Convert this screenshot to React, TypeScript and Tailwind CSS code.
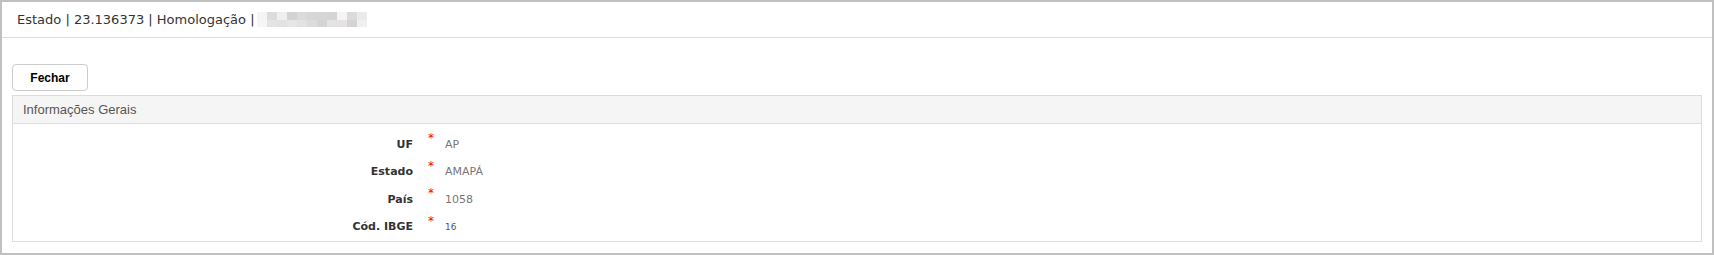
import React from 'react'

const rows = [
  { label: 'UF', value: 'AP', small: false },
  { label: 'Estado', value: 'AMAPÁ', small: false },
  { label: 'País', value: '1058', small: false },
  { label: 'Cód. IBGE', value: '16', small: true },
]

// pixelated blur blocks after the header text
const blurTop = ['#f4f4f4', '#dcdcdc', '#eeeff0', '#d6d2d2', '#dadbdc', '#d7d7d8', '#d6d6d6', '#d4d4d6', '#f7f4f2', '#dadcdc', '#e9eaeb']
const blurBottom = ['#f7f6f4', '#e4e4e4', '#e2e2e2', '#e6e6e6', '#e2e2e2', '#dcdcdc', '#d4d4d4', '#e3e3e3', '#e4e2e2', '#d4d4d4', '#f0f0f0']

export default function App() {
  return (
    <div className="w-[1714px] h-[255px] border-2 border-[#c0c0c0] bg-white flex flex-col">
      <div className="h-[37px] border-b border-[#dcdcdc] flex items-center pl-[15px] text-[13px] text-[#333] font-['DejaVu_Sans',Verdana,sans-serif]">
        <span>Estado | 23.136373 | Homologação |</span>
        <div className="ml-[2px] flex flex-col">
          <div className="flex">
            {blurTop.map((c, i) => (
              <div key={i} className="w-[10px] h-[8px]" style={{ backgroundColor: c }} />
            ))}
          </div>
          <div className="flex">
            {blurBottom.map((c, i) => (
              <div key={i} className="w-[10px] h-[7px]" style={{ backgroundColor: c }} />
            ))}
          </div>
        </div>
      </div>

      <div className="px-[10px] pt-[26px] pb-[11px] flex-1 flex flex-col">
        <button className="w-[76px] h-[27px] border border-[#ccc] rounded-[4px] bg-white text-[12px] font-bold text-black font-['Liberation_Sans',Arial,sans-serif]">
          Fechar
        </button>

        <div className="mt-[4px] border border-[#dcdcdc] flex-1 flex flex-col">
          <div className="h-[28px] bg-[#f5f5f5] border-b border-[#dcdcdc] flex items-center pl-[10px] text-[13px] text-[#555] font-['Liberation_Sans',Arial,sans-serif]">
            Informações Gerais
          </div>
          <div className="pt-[7px] flex flex-col font-['DejaVu_Sans',Tahoma,sans-serif]">
            {rows.map((r) => (
              <div key={r.label} className="h-[27.5px] flex items-center">
                <div className="w-[400px] text-right text-[11px] font-bold text-[#333]">{r.label}</div>
                <div className="w-[32px] self-start pt-[1px] pl-[15px] text-[12px] leading-none text-[#e00]">*</div>
                <div className={r.small ? 'text-[9px] text-[#555]' : 'text-[11px] text-[#777]'}>{r.value}</div>
              </div>
            ))}
          </div>
        </div>
      </div>
    </div>
  )
}
